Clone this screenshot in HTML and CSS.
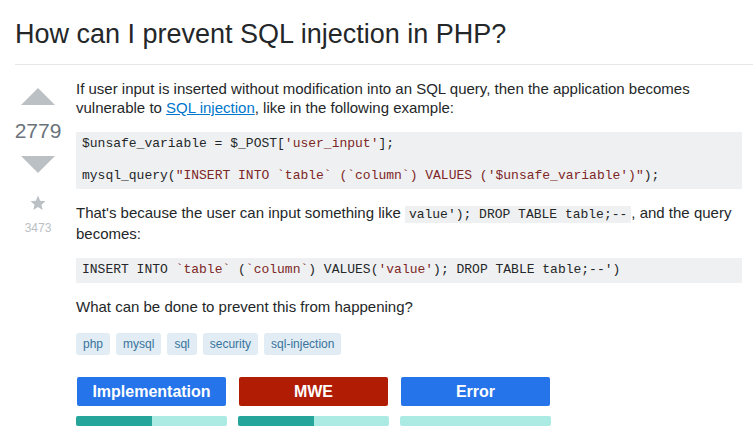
FILE: index.html
```html
<!DOCTYPE html>
<html>
<head>
<meta charset="utf-8">
<link rel="stylesheet" href="styles.css">
</head>
<body>
<div class="page">
  <h1 class="title">How can I prevent SQL injection in PHP?</h1>
  <div class="post">
    <div class="votes">
      <svg class="arrow" width="36" height="18" viewBox="0 0 36 18"><path d="M1 18h34L18 1z" fill="#bbc0c4"/></svg>
      <div class="count">2779</div>
      <svg class="arrow" width="36" height="18" viewBox="0 0 36 18"><path d="M1 0h34L18 17z" fill="#bbc0c4"/></svg>
      <svg class="star" width="18" height="18" viewBox="0 0 24 24"><path d="M12 2l2.9 6.9 7.1.6-5.4 4.7 1.7 7L12 17.3 5.7 21.2l1.7-7L2 9.5l7.1-.6z" fill="#bbc0c4"/></svg>
      <div class="favs">3473</div>
    </div>
    <div class="body">
      <p>If user input is inserted without modification into an SQL query, then the application becomes vulnerable to <a href="#">SQL injection</a>, like in the following example:</p>
      <pre class="code">$unsafe_variable = $_POST[<span class="s">'user_input'</span>];

mysql_query(<span class="s">"INSERT INTO `table` (`column`) VALUES ('$unsafe_variable')"</span>);</pre>
      <p>That's because the user can input something like <code>value'); DROP TABLE table;--</code>, and the query becomes:</p>
      <pre class="code">INSERT INTO <span class="s">`table`</span> (<span class="s">`column`</span>) VALUES(<span class="s">'value'</span>); DROP TABLE table;--')</pre>
      <p class="last">What can be done to prevent this from happening?</p>
      <div class="tags">
        <span class="tag">php</span><span class="tag">mysql</span><span class="tag">sql</span><span class="tag">security</span><span class="tag">sql-injection</span>
      </div>
      <div class="actions">
        <div class="action">
          <div class="btn blue">Implementation</div>
          <div class="bar"><div class="fill" style="width:50%"></div></div>
        </div>
        <div class="action">
          <div class="btn red">MWE</div>
          <div class="bar"><div class="fill" style="width:50%"></div></div>
        </div>
        <div class="action">
          <div class="btn blue">Error</div>
          <div class="bar"><div class="fill" style="width:0%"></div></div>
        </div>
      </div>
    </div>
  </div>
</div>
</body>
</html>
```
FILE: styles.css
```css
* { box-sizing: border-box; }
html, body { margin: 0; padding: 0; background: #fff; }
body {
  font-family: "Liberation Sans", Arial, sans-serif;
  color: #242729;
}
.page { padding: 17px 0 0 15px; }
.title {
  margin: 0;
  font-size: 27px;
  font-weight: normal;
  line-height: 35px;
  color: #242729;
  padding-bottom: 12px;
  border-bottom: 1px solid #e4e6e8;
}
.post {
  display: flex;
  padding-top: 14px;
}
.votes {
  width: 61px;
  flex: none;
  display: flex;
  flex-direction: column;
  align-items: center;
  padding-right: 15px;
  padding-top: 8px;
}
.arrow { display: block; }
.count {
  font-size: 21px;
  line-height: 22px;
  color: #6a737c;
  margin: 15px 0 14px;
}
.star { margin-top: 20px; }
.favs {
  font-size: 12px;
  line-height: 14px;
  color: #bbc0c4;
  margin-top: 9px;
}
.body {
  width: 666px;
  font-size: 15px;
  line-height: 19px;
}
.body p { margin: 0 0 15px; }
.body p.last { margin-bottom: 17px; }
.body a { color: #0077cc; text-decoration: underline; }
.code {
  margin: 0 0 14px;
  background: #eff0f1;
  padding: 4px 6px 5px;
  font-family: "Liberation Mono", "DejaVu Sans Mono", monospace;
  font-size: 13px;
  line-height: 16px;
  color: #242729;
  white-space: pre;
}
.s { color: #7d2727; }
code {
  font-family: "Liberation Mono", "DejaVu Sans Mono", monospace;
  font-size: 13px;
  background: #eff0f1;
  padding: 1px 4px;
}
.tags { display: flex; gap: 6px; }
.tag {
  background: #e1ecf4;
  color: #39739d;
  font-size: 12px;
  line-height: 14px;
  padding: 4px 7px;
  border-radius: 3px;
}
.actions {
  display: flex;
  gap: 11px;
  margin-top: 22px;
}
.action { width: 151px; }
.btn {
  height: 29px;
  margin: 0 1px;
  border-radius: 2px;
  color: #fff;
  font-weight: bold;
  font-size: 16px;
  line-height: 29px;
  text-align: center;
}
.btn.blue { background: #2574ea; }
.btn.red { background: #b11c04; }
.bar {
  margin-top: 10px;
  height: 10px;
  border-radius: 2px;
  background: #aceae4;
  overflow: hidden;
}
.fill { height: 100%; background: #26a69a; }
```
